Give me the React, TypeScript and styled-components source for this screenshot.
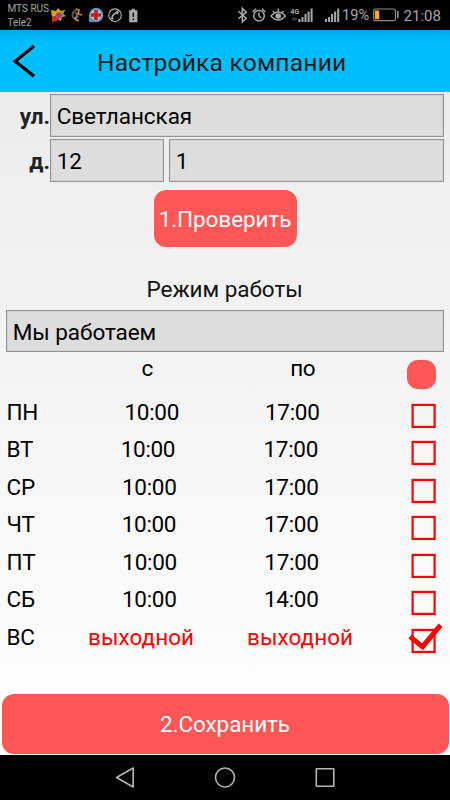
import React from 'react';
import styled, { createGlobalStyle } from 'styled-components';

const GlobalStyle = createGlobalStyle`
  * { box-sizing: border-box; }
  body { margin: 0; background: #000; font-family: Roboto, "Liberation Sans", sans-serif; }
`;

const Screen = styled.div`
  width: 450px;
  height: 800px;
  display: flex;
  flex-direction: column;
  overflow: hidden;
  color: #000;
  font-size: 22.5px;
  white-space: nowrap;
`;

const StatusBar = styled.div`
  height: 30px;
  flex: none;
  display: flex;
  background: #000;
  color: #a6a6a6;
`;

const Carriers = styled.div`
  width: 50px;
  padding: 2px 0 0 7.5px;
  font-size: 10px;
  line-height: 13.5px;
`;

const StatusIcons = styled.svg`
  display: block;
  flex: none;
`;

const Percent = styled.div`
  width: 31px;
  font-size: 14.6px;
  line-height: 30px;
`;

const Clock = styled.div`
  padding-left: 3.5px;
  font-size: 15.1px;
  line-height: 32px;
`;

const Header = styled.header`
  height: 62px;
  flex: none;
  display: flex;
  align-items: center;
  background: linear-gradient(#00a6e0 0, #00b5f1 5px, #00bdfc 12px, #00bfff 18px);
`;

const BackButton = styled.button`
  width: 95px;
  height: 62px;
  padding: 0;
  border: 0;
  background: none;
`;

const Title = styled.h1`
  margin: 0;
  padding: 2px 0 0 2px;
  color: #1c1c1c;
  font-size: 24.6px;
  font-weight: 400;
  letter-spacing: 0.2px;
`;

const Content = styled.main`
  height: 663px;
  flex: none;
  display: flex;
  flex-direction: column;
  padding: 2px 1.5px 1.5px;
  background: linear-gradient(#ececec, #ffffff);
`;

const Address = styled.section`
  display: flex;
  flex-direction: column;
  gap: 3px;
  margin-bottom: 8.5px;
`;

const AddressRow = styled.div`
  display: flex;
  height: 42px;
`;

const FieldLabel = styled.label`
  width: 48.5px;
  text-align: right;
  font-weight: 700;
  line-height: 45px;
  color: #222;
`;

const Field = styled.div<{ $width: number; $gap?: number }>`
  width: ${p => p.$width}px;
  height: 42.5px;
  flex: none;
  margin-left: ${p => p.$gap ?? 0}px;
  padding-left: 5.7px;
  border: 1px solid #929292;
  box-shadow: inset 0 0 0 1px #d3d3d3;
  background: #ddd;
  line-height: 43px;
  letter-spacing: -0.05px;
`;

const PrimaryButton = styled.button<{ $width: number; $height: number }>`
  width: ${p => p.$width}px;
  height: ${p => p.$height}px;
  flex: none;
  align-self: center;
  padding: 1px 0 0;
  border: 0;
  border-radius: 12px;
  background: #ff5656;
  box-shadow: 0 0 1px 1px #fff;
  color: #fff;
  font: 400 22.5px Roboto, "Liberation Sans", sans-serif;
  letter-spacing: -0.08px;
`;

const SectionTitle = styled.h2`
  margin: 27.5px 0 5.5px;
  padding-left: 145px;
  height: 30px;
  font-size: 22.5px;
  font-weight: 400;
  line-height: 30px;
  letter-spacing: -0.05px;
  color: #111;
`;

const Schedule = styled.div`
  display: flex;
  flex-direction: column;
  flex: 1;
`;

const ScheduleRow = styled.div`
  display: grid;
  grid-template-columns: 118px 143px 144px 42px;
  height: 37.5px;
  line-height: 37.5px;
`;

const HeadRow = styled(ScheduleRow)`
  height: 41.5px;
  line-height: 33.5px;
`;

const Day = styled.div`
  padding-left: 5px;
  letter-spacing: -0.2px;
`;

const Time = styled.div<{ $shift: number; $off?: boolean }>`
  margin-left: ${p => p.$shift}px;
  color: ${p => (p.$off ? '#f00' : '#000')};
  letter-spacing: ${p => (p.$off ? 0.05 : -0.3)}px;
`;

const ToggleAll = styled.button`
  width: 29px;
  height: 29px;
  margin: 7.5px 0 0 0.5px;
  padding: 0;
  border: 0;
  border-radius: 11px;
  background: #ff5656;
`;

const CheckSvg = styled.svg`
  display: block;
  margin-top: 4px;
`;

const NavBar = styled.nav`
  height: 45px;
  flex: none;
  background: #000;
`;

const week = [
  { day: 'ПН', from: '10:00', to: '17:00', a: 5, b: 2.5 },
  { day: 'ВТ', from: '10:00', to: '17:00', a: 1.2, b: 1 },
  { day: 'СР', from: '10:00', to: '17:00', a: 2.5, b: 1.5 },
  { day: 'ЧТ', from: '10:00', to: '17:00', a: 2.2, b: 1.5 },
  { day: 'ПТ', from: '10:00', to: '17:00', a: 2.8, b: 1.8 },
  { day: 'СБ', from: '10:00', to: '14:00', a: 2.5, b: 1.5 },
  { day: 'ВС', from: 'выходной', to: 'выходной', a: -31.5, b: -15.5, off: true },
];

const Check = ({ checked }: { checked?: boolean }) => (
  <CheckSvg width="42" height="34" viewBox="0 0 42 34">
    <rect x="5.6" y="6.9" width="22" height="22" fill="none" stroke="#f00" strokeWidth="2.2" />
    {checked && <path d="M3 13.6 L15.6 23.7 L33.6 2.2" fill="none" stroke="#f00" strokeWidth="5" />}
  </CheckSvg>
);

const NotificationIcons = () => (
  <StatusIcons width="187" height="30" viewBox="50 0 187 30">
    <path d="M51 10l5 1 2-3 3 3 4-1-2 4 3 2-4 1-1 4-4-2-4 3-1-4z" fill="#d5a519" />
    <path d="M52 16l4 0 3 3-2 2-5 1z" fill="#c92d20" />
    <path d="M61 11l4-1-2 4 3 2-4 1-1 3z" fill="#8b9f2b" />
    <circle cx="58.7" cy="15.5" r="3.2" fill="#9b4b91" />
    <path d="M56.7 15.5h4M58.7 13.5v4" stroke="#d42a36" strokeWidth="1.3" />
    <path d="M77 9.5q-6 2-4 8l4 3" fill="none" stroke="#59605a" strokeWidth="1.7" />
    <path d="M76 9l3 1-1 4 4 1M78 14l-3 5 4 2" fill="none" stroke="#ce853c" strokeWidth="1.7" />
    <path d="M76 13l2 5" stroke="#3470aa" strokeWidth="2" />
    <path d="M75 12l2 2" stroke="#b72a20" strokeWidth="2" />
    <path d="M89 22v-7a7.2 7.2 0 1 1 7 7.2z" fill="#4f91b8" />
    <circle cx="96" cy="15" r="5.8" fill="#aac0ca" />
    <path d="M96 10v10M91 15h10" stroke="#c51d20" strokeWidth="3.7" />
    <circle cx="115" cy="15.2" r="6.3" fill="none" stroke="#b0b0b0" strokeWidth="1.1" />
    <path d="M111.7 19q.2-5 6.5-7.2M111.6 19l2-.6M118.2 11.8l-1.5-1M118 12l-.8 2" fill="none" stroke="#b0b0b0" strokeWidth="1.6" />
    <path d="M131.8 8.7h3v1.5h2.6v12h-8.2v-12h2.6z" fill="#ababab" />
    <path d="M133.3 12.5v4.5M133.3 18.5v1.8" stroke="#111" strokeWidth="1.5" />
  </StatusIcons>
);

const Bars = ({ x, y }: { x: number; y: number }) => (
  <g fill="#a8a8a8">
    {[3, 5, 8, 10.5, 13.5].map((h, i) => (
      <rect key={h} x={x + i * 3.05} y={y - h} width="2" height={h} />
    ))}
  </g>
);

const SystemIcons = () => (
  <StatusIcons width="105" height="30" viewBox="237 0 105 30">
    <path d="M238.3 11.3l8 7-4 3.8V8.3l4 3.8-8 6.7" fill="none" stroke="#a8a8a8" strokeWidth="1.5" />
    <g fill="none" stroke="#a8a8a8" strokeWidth="1.5">
      <circle cx="259" cy="15.8" r="5.3" />
      <path d="M259 12.5v3.5l2.5 2M252.6 12l3.6-3.2M265.4 12l-3.6-3.2" />
      <path d="M271 16q7.2-8 14.4 0-7.2 8-14.4 0z" />
      <path d="M272.8 11l1.4 1.6M278.2 8.5v2.5M283.6 11l-1.4 1.6" />
    </g>
    <circle cx="278.2" cy="16" r="2.8" fill="#a8a8a8" />
    <text x="290.5" y="14" fill="#a8a8a8" fontFamily="Roboto, sans-serif" fontSize="6.8" fontWeight="700">4G</text>
    <path d="M292 19h5M294.5 17v4" stroke="#333" strokeWidth="2" />
    <Bars x={298.4} y={22} />
    <Bars x={325} y={22} />
  </StatusIcons>
);

export default function App() {
  return (
    <>
      <GlobalStyle />
      <Screen>
        <StatusBar>
          <Carriers>
            <div>MTS RUS</div>
            <div>Tele2</div>
          </Carriers>
          <NotificationIcons />
          <SystemIcons />
          <Percent>19%</Percent>
          <StatusIcons width="27" height="30" viewBox="373 0 27 30">
            <rect x="373.7" y="9" width="21.8" height="11.7" rx="1.8" fill="none" stroke="#8f8f8f" strokeWidth="1.2" />
            <rect x="375" y="10.5" width="4.2" height="8.7" fill="#ffab16" />
            <path d="M397.8 11v7.3" stroke="#8f8f8f" strokeWidth="1.6" />
          </StatusIcons>
          <Clock>21:08</Clock>
        </StatusBar>

        <Header>
          <BackButton aria-label="Назад">
            <svg width="95" height="62" viewBox="0 0 95 62">
              <path d="M34.1 16L15.3 31.2L34.1 46.2" fill="none" stroke="#000" strokeWidth="3.3" />
            </svg>
          </BackButton>
          <Title>Настройка компании</Title>
        </Header>

        <Content>
          <Address>
            <AddressRow>
              <FieldLabel>ул.</FieldLabel>
              <Field $width={394}>Светланская</Field>
            </AddressRow>
            <AddressRow>
              <FieldLabel>д.</FieldLabel>
              <Field $width={114}>12</Field>
              <Field $width={275} $gap={5}>1</Field>
            </AddressRow>
          </Address>
          <PrimaryButton $width={143} $height={57}>1.Проверить</PrimaryButton>
          <SectionTitle>Режим работы</SectionTitle>
          <Field $width={438} $gap={4.5}>Мы работаем</Field>
          <Schedule>
            <HeadRow>
              <div />
              <Time $shift={22}>с</Time>
              <Time $shift={27.7}>по</Time>
              <ToggleAll aria-label="Все дни" />
            </HeadRow>
            {week.map(d => (
              <ScheduleRow key={d.day}>
                <Day>{d.day}</Day>
                <Time $shift={d.a} $off={d.off}>{d.from}</Time>
                <Time $shift={d.b} $off={d.off}>{d.to}</Time>
                <Check checked={d.off} />
              </ScheduleRow>
            ))}
          </Schedule>
          <PrimaryButton $width={447} $height={59.5}>2.Сохранить</PrimaryButton>
        </Content>

        <NavBar>
          <svg width="450" height="45" viewBox="0 0 450 45" fill="none" stroke="#b5b5b5" strokeWidth="1.6" strokeLinejoin="round">
            <path d="M116.5 22.5L133.2 13V32z" />
            <circle cx="225" cy="22.5" r="9.5" />
            <rect x="316.3" y="13.8" width="17.5" height="17.5" rx="0.5" />
          </svg>
        </NavBar>
      </Screen>
    </>
  );
}
